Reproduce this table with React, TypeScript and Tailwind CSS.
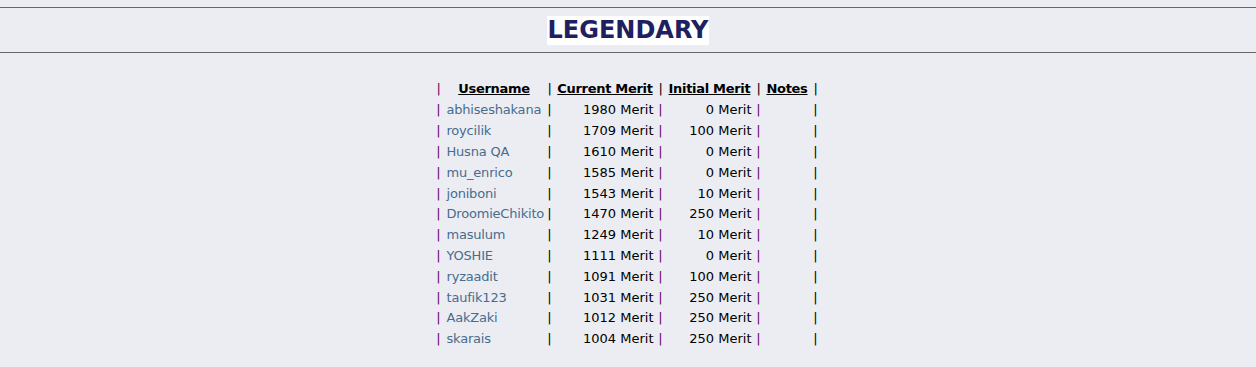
const rows: [string, number, number][] = [
  ["abhiseshakana", 1980, 0],
  ["roycilik", 1709, 100],
  ["Husna QA", 1610, 0],
  ["mu_enrico", 1585, 0],
  ["joniboni", 1543, 10],
  ["DroomieChikito", 1470, 250],
  ["masulum", 1249, 10],
  ["YOSHIE", 1111, 0],
  ["ryzaadit", 1091, 100],
  ["taufik123", 1031, 250],
  ["AakZaki", 1012, 250],
  ["skarais", 1004, 250],
];

function Pipe({ purple }: { purple?: boolean }) {
  return (
    <div className={`w-[12px] shrink-0 text-center ${purple ? "text-[#660066]" : "text-black"}`}>|</div>
  );
}

export default function App() {
  return (
    <div
      className="min-h-[367px] whitespace-nowrap bg-[#ecedf3] pt-[7px] text-[13px] text-black"
      style={{ fontFamily: '"DejaVu Sans", Verdana, sans-serif' }}
    >
      <div className="border-t border-[#666]" />
      <div className="flex h-[44px] items-center justify-center">
        <h1 className="bg-white px-[1px] text-[24px] font-bold leading-[29px] text-[#1e2060]">LEGENDARY</h1>
      </div>
      <div className="border-t border-[#666]" />

      <div className="flex justify-center pt-[25px]">
        <div className="ml-[-2px] w-[389px]">
          <div className="mb-[1px] flex h-[20.8px] items-center tracking-[-0.3px]">
            <Pipe purple />
            <div className="w-[99px] shrink-0 text-center font-bold underline">Username</div>
            <Pipe />
            <div className="flex w-[99px] shrink-0 justify-center font-bold underline">Current Merit</div>
            <Pipe />
            <div className="flex w-[86px] shrink-0 justify-center font-bold underline">Initial Merit</div>
            <Pipe />
            <div className="w-[45px] shrink-0 text-center font-bold underline">Notes</div>
            <Pipe />
          </div>
          {rows.map(([name, cur, init]) => (
            <div key={name} className="flex h-[20.8px] items-center">
              <Pipe purple />
              <div className="w-[99px] shrink-0 pl-[2px] tracking-[-0.2px] text-[#476c8e]">{name}</div>
              <Pipe />
              <div className="w-[99px] shrink-0 pr-[1px] text-right">{cur} Merit</div>
              <Pipe purple />
              <div className="w-[86px] shrink-0 pr-[1px] text-right">{init} Merit</div>
              <Pipe purple />
              <div className="w-[45px] shrink-0" />
              <Pipe />
            </div>
          ))}
        </div>
      </div>
    </div>
  );
}
